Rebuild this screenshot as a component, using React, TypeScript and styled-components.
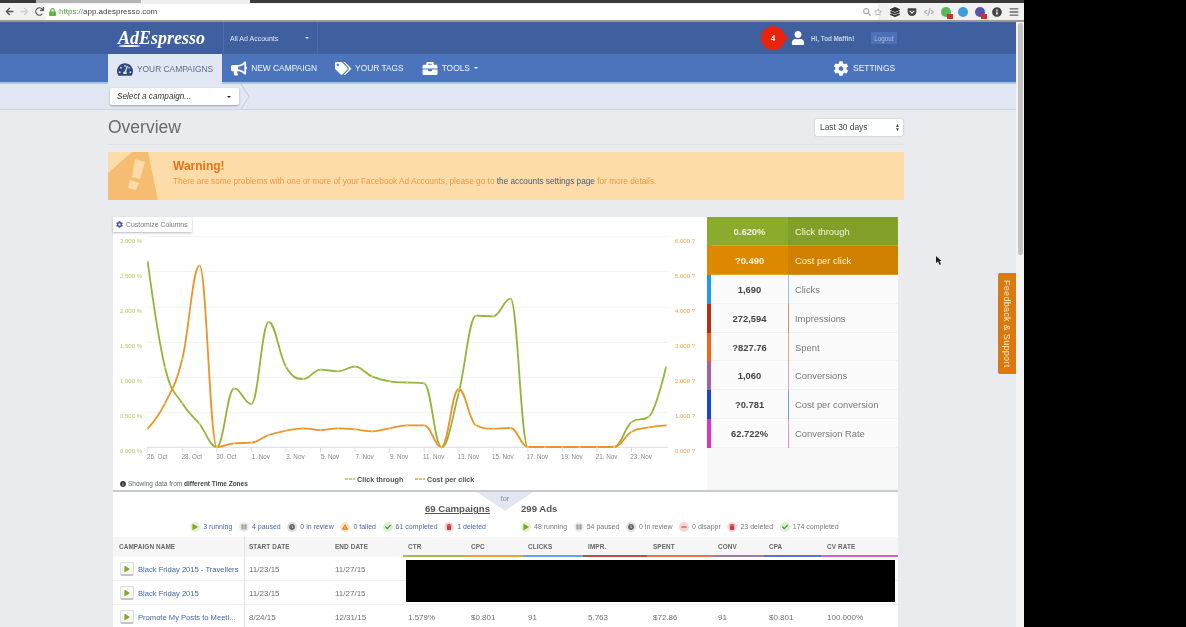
import React from 'react';
import styled, { createGlobalStyle } from 'styled-components';
import {
  FaArrowLeft, FaArrowRight, FaBars, FaBriefcase, FaBullhorn, FaCheck, FaClock, FaCog, FaCode,
  FaExclamationTriangle, FaGetPocket, FaInfoCircle, FaLayerGroup, FaLock, FaMinus, FaPause, FaPlay,
  FaRedo, FaRegStar, FaSearch, FaTachometerAlt, FaTags, FaTrash, FaUser,
} from 'react-icons/fa';

const GlobalStyle = createGlobalStyle`
  html, body {
    margin: 0;
    height: 100%;
    overflow: hidden;
    background: #000;
    font-family: 'Liberation Sans', Arial, sans-serif;
  }
  * { box-sizing: border-box; }
`;

const Screen = styled.div`
  position: relative;
  width: 1024px;
  height: 627px;
  overflow: hidden;
  background: #e9ebee;
  display: flex;
  flex-direction: column;
  filter: blur(0.4px);
`;

const TabStrip = styled.div`
  height: 3px;
  display: flex;
  background: #3a3a3a;
`;

const TabPiece = styled.div<{ $w: number; $bg: string }>`
  width: ${p => p.$w}px;
  background: ${p => p.$bg};
`;

const BrowserBar = styled.div`
  height: 19px;
  display: flex;
  align-items: center;
  padding: 0 5px;
  background: #f1f1f1;
  border-bottom: 2px solid #9a9a9a;
  color: #555;
  font-size: 9px;
`;

const NavGlyphs = styled.div`
  width: 41px;
  display: flex;
  gap: 6px;
  svg { width: 9px; height: 9px; }
`;

const UrlField = styled.div`
  flex: 1;
  height: 16px;
  display: flex;
  align-items: center;
  gap: 3px;
  padding-left: 3px;
  background: #fff;
  font-size: 8px;
  color: #444;
  svg { width: 7px; height: 8px; color: #66b53f; }
  b { font-weight: 400; color: #4d9e46; }
`;

const AddressTools = styled.div`
  width: 24px;
  display: flex;
  gap: 3px;
  margin-left: -15px;
  margin-right: -2px;
  color: #aaa;
  svg { width: 8px; height: 8px; }
`;

const ExtensionRow = styled.div`
  display: flex;
  align-items: center;
  gap: 7px;
  margin-left: 5px;
`;

const Ext = styled.span<{ $c: string }>`
  width: 10px;
  height: 10px;
  display: flex;
  color: ${p => p.$c};
  svg { width: 100%; height: 100%; }
`;

const ExtDot = styled.span<{ $c: string; $badge?: boolean }>`
  position: relative;
  width: 10px;
  height: 10px;
  border-radius: 50%;
  background: ${p => p.$c};
  &::after {
    content: '';
    display: ${p => (p.$badge ? 'block' : 'none')};
    position: absolute;
    right: -2px;
    bottom: -2px;
    width: 6px;
    height: 5px;
    background: #c9342f;
  }
`;

const Body = styled.div`
  flex: 1;
  min-height: 0;
  display: flex;
`;

const Page = styled.div`
  width: 1016px;
  display: flex;
  flex-direction: column;
  background: #e9ebee;
`;

const ScrollTrack = styled.div`
  flex: 1;
  padding: 1px 1px 0 2px;
  background: #f3f3f3;
`;

const ScrollThumb = styled.div`
  height: 232px;
  border-radius: 3px;
  background: #c3c3c3;
`;

const TopBar = styled.header`
  height: 32px;
  flex: none;
  display: flex;
  padding-left: 108px;
  background: #3f5f9e;
`;

const Logo = styled.div`
  position: relative;
  width: 115px;
  padding: 5px 0 0 10px;
  color: #fff;
  font-family: 'Liberation Serif', serif;
  font-style: italic;
  font-weight: 700;
  font-size: 18px;
  line-height: 22px;
  &::after {
    content: '';
    position: absolute;
    left: 11px;
    top: 23px;
    width: 21px;
    height: 1.5px;
    background: #fff;
    border-radius: 50%;
  }
`;

const AccountSwitch = styled.div`
  width: 95px;
  display: flex;
  align-items: center;
  justify-content: space-between;
  padding: 0 8px 0 6px;
  border-left: 1px solid #4f6ca8;
  border-right: 1px solid #4f6ca8;
  color: #e4e9f3;
  font-size: 7px;
`;

const Caret = styled.span<{ $c?: string }>`
  width: 0;
  height: 0;
  border-left: 2px solid transparent;
  border-right: 2px solid transparent;
  border-top: 2.5px solid ${p => p.$c || '#dfe5f1'};
`;

const UserArea = styled.div`
  width: 586px;
  display: flex;
  align-items: center;
  justify-content: flex-end;
  padding-right: 7px;
`;

const Notice = styled.div`
  position: relative;
  width: 24px;
  height: 24px;
  margin-right: 6px;
  display: flex;
  align-items: center;
  justify-content: center;
  border-radius: 50%;
  background: #e8240c;
  color: #fff;
  font-family: 'Liberation Serif', serif;
  font-weight: 700;
  font-size: 9px;
  &::after {
    content: '';
    position: absolute;
    right: -3px;
    top: 7px;
    border-left: 5px solid #e8240c;
    border-top: 5px solid transparent;
    border-bottom: 5px solid transparent;
  }
`;

const UserGlyph = styled.span`
  display: flex;
  margin-right: 6px;
  color: #fff;
  svg { width: 14px; height: 14px; }
`;

const Greeting = styled.span`
  width: 60px;
  color: #c9d4e9;
  font-size: 6.3px;
  font-weight: 700;
`;

const Logout = styled.span`
  width: 26px;
  height: 12px;
  display: flex;
  align-items: center;
  justify-content: center;
  background: #4d71b6;
  color: #a6bbe0;
  font-size: 6.3px;
`;

const NavBar = styled.nav`
  height: 30px;
  flex: none;
  display: flex;
  padding: 0 112px 0 108px;
  background: #4b74bc;
  border-bottom: 2px solid #a9c3e9;
`;

const NavTab = styled.div<{ $active?: boolean; $right?: boolean }>`
  display: flex;
  align-items: center;
  gap: 4px;
  padding: 0 9px;
  margin-left: ${p => (p.$right ? 'auto' : '0')};
  margin-bottom: ${p => (p.$active ? '-2px' : '0')};
  background: ${p => (p.$active ? '#e1e8f3' : 'transparent')};
  color: ${p => (p.$active ? '#5d6c88' : '#f2f5fb')};
  font-size: 8.4px;
  svg { width: 16px; height: 15px; color: ${p => (p.$active ? '#33487a' : '#fff')}; }
`;

const Crumbs = styled.div`
  height: 26px;
  flex: none;
  display: flex;
  align-items: center;
  padding-left: 110px;
  background: #e1e8f3;
  border-bottom: 1px solid #ccd4e3;
`;

const CampaignSelect = styled.div`
  width: 129px;
  height: 17px;
  display: flex;
  align-items: center;
  justify-content: space-between;
  padding: 0 8px 0 7px;
  background: #fff;
  border-radius: 2px;
  box-shadow: 0 1px 2px rgba(60, 70, 90, 0.45);
  color: #333;
  font-size: 8.2px;
  font-style: italic;
`;

const CrumbArrow = styled.svg`
  width: 10px;
  height: 25px;
  margin-left: 1px;
`;

const Content = styled.main`
  width: 796px;
  margin-left: 108px;
`;

const TitleRow = styled.div`
  height: 35px;
  display: flex;
  align-items: center;
  justify-content: space-between;
  border-bottom: 1px solid #dcdfe3;
`;

const Title = styled.h1`
  margin: 0;
  color: #666b70;
  font-size: 17.5px;
  font-weight: 400;
`;

const RangeSelect = styled.div`
  width: 88px;
  height: 17px;
  margin-right: 1px;
  display: flex;
  align-items: center;
  justify-content: space-between;
  padding: 0 3px 0 5px;
  background: #fff;
  border-radius: 2px;
  box-shadow: 0 0 2px rgba(60, 70, 90, 0.35);
  color: #444;
  font-size: 8.4px;
`;

const UpDown = styled.span`
  color: #444;
  font-size: 5px;
  line-height: 4px;
  text-align: center;
`;

const Warning = styled.section`
  height: 48px;
  margin-top: 7px;
  display: flex;
  background: #fddcaa;
`;

const WarningMark = styled.svg`
  width: 65px;
  height: 48px;
  flex: none;
`;

const WarningCopy = styled.div`
  padding-top: 7px;
`;

const WarningTitle = styled.div`
  color: #e4731a;
  font-size: 12px;
  font-weight: 700;
  line-height: 14px;
`;

const WarningText = styled.div`
  margin-top: 3px;
  color: #e89a3e;
  font-size: 8.25px;
  line-height: 12px;
  a { color: #3d5b97; text-decoration: none; }
`;

const Card = styled.section`
  width: 785px;
  margin: 17px 0 0 5px;
  background: #fff;
`;

const ChartRow = styled.div`
  height: 273px;
  display: flex;
`;

const ChartPane = styled.div`
  position: relative;
  width: 594px;
  svg { display: block; }
`;

const CustomizeButton = styled.div`
  position: absolute;
  left: 0;
  top: 0;
  width: 79px;
  height: 15px;
  display: flex;
  align-items: center;
  gap: 3px;
  padding-left: 3px;
  background: #fff;
  box-shadow: 0 1px 2px rgba(70, 80, 110, 0.4);
  color: #777;
  font-size: 6.9px;
  svg { width: 7px; height: 7px; color: #4b5a9c; }
`;

const TimeZoneNote = styled.div`
  position: absolute;
  left: 7px;
  bottom: 3px;
  display: flex;
  align-items: center;
  gap: 2px;
  color: #666;
  font-size: 6.5px;
  b { color: #444; }
  svg { width: 6px; height: 6px; color: #333; }
`;

const MetricList = styled.div`
  width: 191px;
  background: #f8f8f8;
`;

const MetricRow = styled.div<{ $accent: string; $filled?: boolean }>`
  height: 28.9px;
  display: grid;
  grid-template-columns: 77px 1fr;
  align-items: stretch;
  border-left: 4px solid ${p => p.$accent};
  background: ${p => (p.$filled ? p.$accent : '#fbfbfb')};
  box-shadow: inset 0 -1px 0 ${p => (p.$filled ? 'rgba(255,255,255,0.2)' : '#f0f0f0')};
  font-size: 9.4px;
`;

const MetricValue = styled.div<{ $filled?: boolean }>`
  display: flex;
  align-items: center;
  justify-content: center;
  font-weight: 700;
  color: ${p => (p.$filled ? '#f3f3df' : '#444')};
`;

const MetricName = styled.div<{ $accent: string; $filled?: boolean }>`
  display: flex;
  align-items: center;
  padding-left: 6px;
  border-left: 1px solid ${p => (p.$filled ? 'transparent' : `${p.$accent}88`)};
  background: ${p => (p.$filled ? 'rgba(0,0,0,0.06)' : 'transparent')};
  color: ${p => (p.$filled ? '#f6f3dc' : '#777')};
`;

const Summary = styled.div`
  position: relative;
  height: 47px;
  display: grid;
  grid-template-columns: 392px 1fr;
  border-top: 2px solid #c6c9ce;
`;

const ForFlag = styled.div`
  position: absolute;
  left: 364px;
  top: 0;
  width: 56px;
  height: 19px;
  padding-top: 2px;
  clip-path: polygon(0 0, 100% 0, 50% 100%);
  background: #e1e6f0;
  color: #8b8f97;
  font-size: 7.5px;
  text-align: center;
`;

const SummaryColumn = styled.div<{ $right?: boolean }>`
  display: flex;
  flex-direction: column;
  gap: 7px;
  padding-top: 11px;
  align-items: ${p => (p.$right ? 'flex-end' : 'flex-start')};
  padding-right: ${p => (p.$right ? '15px' : '0')};
  padding-left: ${p => (p.$right ? '0' : '16px')};
`;

const SummaryTitle = styled.div<{ $underlined?: boolean }>`
  color: #555;
  font-size: 9.6px;
  font-weight: 700;
  line-height: 12px;
  text-decoration: ${p => (p.$underlined ? 'underline' : 'none')};
`;

const StatusRow = styled.div<{ $inset?: boolean }>`
  display: flex;
  gap: 6.6px;
  margin-right: ${p => (p.$inset ? '4px' : '0')};
`;

const Status = styled.span<{ $muted?: boolean }>`
  display: flex;
  align-items: center;
  gap: 3px;
  color: ${p => (p.$muted ? '#777' : '#4a69a8')};
  font-size: 7px;
  line-height: 10px;
  white-space: nowrap;
`;

const StatusIcon = styled.span<{ $bg: string; $fg: string }>`
  width: 10px;
  height: 10px;
  display: flex;
  align-items: center;
  justify-content: center;
  border-radius: 50%;
  background: ${p => p.$bg};
  color: ${p => p.$fg};
  svg { width: 6px; height: 6px; }
`;

const columns = '132px 86px 72px 62px 58px 60px 64px 66px 51px 57px 77px';

const TableWrap = styled.div`
  position: relative;
`;

const HeadRow = styled.div`
  height: 20px;
  display: grid;
  grid-template-columns: ${columns};
  background: #f6f6f6;
`;

const HeadCell = styled.div<{ $line?: string; $first?: boolean; $pad: number }>`
  display: flex;
  align-items: center;
  padding-left: ${p => p.$pad}px;
  border-bottom: 2px solid ${p => p.$line || 'transparent'};
  border-right: ${p => (p.$first ? '1px solid #e0e0e0' : '0')};
  color: #666;
  font-size: 6.4px;
  font-weight: 700;
  letter-spacing: 0.1px;
`;

const BodyRow = styled.div`
  height: 24px;
  display: grid;
  grid-template-columns: ${columns};
  background: #fff;
  border-bottom: 1px solid #efefef;
`;

const Cell = styled.div<{ $first?: boolean; $pad: number }>`
  display: flex;
  align-items: center;
  gap: 4px;
  padding-left: ${p => p.$pad}px;
  padding-top: 1px;
  border-right: ${p => (p.$first ? '1px solid #e0e0e0' : '0')};
  color: #707070;
  font-size: 8px;
  white-space: nowrap;
`;

const PlayButton = styled.span`
  width: 14px;
  height: 14px;
  flex: none;
  display: flex;
  align-items: center;
  justify-content: center;
  border: 1px solid #ddd;
  border-bottom: 2px solid #c4c4c4;
  border-radius: 2px;
  background: #f7f7f7;
  color: #86a92b;
  svg { width: 6px; height: 6px; }
`;

const CampaignLink = styled.a`
  color: #4465a8;
  font-size: 7.6px;
`;

const Redaction = styled.div`
  position: absolute;
  left: 293px;
  top: 23px;
  width: 489px;
  height: 42px;
  background: #000;
`;

const FeedbackTab = styled.div`
  position: absolute;
  left: 998px;
  top: 273px;
  width: 18px;
  height: 101px;
  display: flex;
  align-items: center;
  justify-content: center;
  background: #d87a10;
  border-radius: 2px 0 0 2px;
  color: #f7e6c8;
  font-size: 9px;
  letter-spacing: 0.3px;
  writing-mode: vertical-rl;
`;

const Pointer = styled.svg`
  position: absolute;
  left: 936px;
  top: 256px;
  width: 6px;
  height: 10px;
`;

const xAt = (i: number) => 147.7 + i * 17.28;

const ctr = [261.7, 367.3, 403.3, 424, 447, 388.3, 404, 322, 366.7, 379, 369.7, 371.3, 366.7, 376.7, 381.3, 382.5,
  383.3, 447.3, 392.7, 315.7, 316.3, 298.7, 447, 447, 447, 447, 447, 447, 422, 416.7, 366.7];
const cpc = [428.7, 403.3, 359, 265.7, 447, 443.3, 442.7, 435, 430.7, 428.3, 430, 428.3, 429.3, 431.3, 428.3, 425.3,
  425.3, 447, 389, 425.3, 428.7, 428, 447, 447, 447, 447, 447, 447, 431.7, 427.3, 425.3];

// same smoothing as a highcharts spline series
const spline = (ys: number[]) => {
  const s = 1.5;
  let d = `M${xAt(0)} ${ys[0]}`;
  let prevRight: [number, number] = [xAt(0), ys[0]];
  for (let i = 1; i < ys.length; i++) {
    const x = xAt(i);
    const y = ys[i];
    let left: [number, number] = [x, y];
    let right: [number, number] = [x, y];
    if (i < ys.length - 1) {
      const last = ys[i - 1];
      const next = ys[i + 1];
      const lx = (s * x + xAt(i - 1)) / (s + 1);
      const rx = (s * x + xAt(i + 1)) / (s + 1);
      let ly = (s * y + last) / (s + 1);
      let ry = (s * y + next) / (s + 1);
      const fix = ((ry - ly) * (rx - x)) / (rx - lx) + y - ry;
      ly += fix;
      ry += fix;
      if (ly > last && ly > y) {
        ly = Math.max(last, y);
        ry = 2 * y - ly;
      } else if (ly < last && ly < y) {
        ly = Math.min(last, y);
        ry = 2 * y - ly;
      }
      if (ry > next && ry > y) {
        ry = Math.max(next, y);
        ly = 2 * y - ry;
      } else if (ry < next && ry < y) {
        ry = Math.min(next, y);
        ly = 2 * y - ry;
      }
      left = [lx, ly];
      right = [rx, ry];
    }
    d += ` C${prevRight[0]} ${prevRight[1]} ${left[0]} ${left[1]} ${x} ${y}`;
    prevRight = right;
  }
  return d;
};

const gridYs = [236.7, 271.7, 307.3, 342.3, 377.3, 412.3, 447.3];
const leftLabels = ['3.000 %', '2.500 %', '2.000 %', '1.500 %', '1.000 %', '0.500 %', '0.000 %'];
const rightLabels = ['6.000 ?', '5.000 ?', '4.000 ?', '3.000 ?', '2.000 ?', '1.000 ?', '0.000 ?'];
const dateLabels = ['26. Oct', '28. Oct', '30. Oct', '1. Nov', '3. Nov', '5. Nov', '7. Nov', '9. Nov', '11. Nov',
  '13. Nov', '15. Nov', '17. Nov', '19. Nov', '21. Nov', '23. Nov'];

const Series = ({ ys, color, dot }: { ys: number[]; color: string; dot: string }) => (
  <g>
    <path d={spline(ys)} fill="none" stroke={color} strokeWidth="1.8" />
    {ys.map((y, i) => <circle key={i} cx={xAt(i)} cy={y} r="1" fill={dot} />)}
  </g>
);

const Chart = () => (
  <svg width="594" height="273" viewBox="113 217 594 273" fontFamily="Liberation Sans, Arial, sans-serif">
    {gridYs.map(y => <line key={y} x1="147" x2="668" y1={y} y2={y} stroke={y > 440 ? '#d9dde2' : '#f1f2f4'} />)}
    {gridYs.map((y, i) => (
      <g key={y} fontSize="6">
        <text x="120" y={y + 6} fill="#b5cb5c">{leftLabels[i]}</text>
        <text x="675" y={y + 6} fill="#efa444">{rightLabels[i]}</text>
      </g>
    ))}
    {dateLabels.map((label, i) => (
      <g key={label}>
        <line x1={xAt(i * 2)} x2={xAt(i * 2)} y1="447" y2="452" stroke="#d9dde2" />
        <text x={xAt(i * 2) + 9.5} y="459" fontSize="6.3" textAnchor="middle" fill="#888">{label}</text>
      </g>
    ))}
    <Series ys={ctr} color="#95b53a" dot="#c9dc74" />
    <Series ys={cpc} color="#e8962a" dot="#f6c477" />
    <line x1="345" x2="355" y1="479" y2="479" stroke="#b1c93f" strokeWidth="1.5" strokeDasharray="3 1" />
    <text x="357" y="481.5" fontSize="7.2" fontWeight="700" fill="#555">Click through</text>
    <line x1="415" x2="425" y1="479" y2="479" stroke="#ed9c2c" strokeWidth="1.5" strokeDasharray="3 1" />
    <text x="427" y="481.5" fontSize="7.2" fontWeight="700" fill="#555">Cost per click</text>
  </svg>
);

const metrics = [
  { value: '0.620%', name: 'Click through', accent: '#8bab2c', filled: true },
  { value: '?0.490', name: 'Cost per click', accent: '#dc8900', filled: true },
  { value: '1,690', name: 'Clicks', accent: '#1e9bea' },
  { value: '272,594', name: 'Impressions', accent: '#b23014' },
  { value: '?827.76', name: 'Spent', accent: '#f0641e' },
  { value: '1,060', name: 'Conversions', accent: '#a4609f' },
  { value: '?0.781', name: 'Cost per conversion', accent: '#1546d8' },
  { value: '62.722%', name: 'Conversion Rate', accent: '#dc32cc' },
];

const iconFor = {
  running: { bg: '#e6f0d0', fg: '#86a92b', glyph: <FaPlay /> },
  paused: { bg: '#ececec', fg: '#a0a0a0', glyph: <FaPause /> },
  review: { bg: '#dedede', fg: '#666', glyph: <FaClock /> },
  failed: { bg: '#fbe6cc', fg: '#e5861f', glyph: <FaExclamationTriangle /> },
  completed: { bg: '#dcefd4', fg: '#3d9a2e', glyph: <FaCheck /> },
  deleted: { bg: '#f8dcdc', fg: '#cf3a46', glyph: <FaTrash /> },
  disappr: { bg: '#f8d6d6', fg: '#d4212b', glyph: <FaMinus /> },
};

type StatusKind = keyof typeof iconFor;

const campaignStatus: [StatusKind, string][] = [
  ['running', '3 running'], ['paused', '4 paused'], ['review', '0 in review'],
  ['failed', '0 failed'], ['completed', '61 completed'], ['deleted', '1 deleted'],
];
const adStatus: [StatusKind, string][] = [
  ['running', '48 running'], ['paused', '54 paused'], ['review', '0 in review'],
  ['disappr', '0 disappr'], ['deleted', '23 deleted'], ['completed', '174 completed'],
];

const StatusList = ({ items, muted }: { items: [StatusKind, string][]; muted?: boolean }) => (
  <StatusRow $inset={!muted}>
    {items.map(([kind, label]) => (
      <Status key={label} $muted={muted}>
        <StatusIcon $bg={iconFor[kind].bg} $fg={iconFor[kind].fg}>{iconFor[kind].glyph}</StatusIcon>
        {label}
      </Status>
    ))}
  </StatusRow>
);

const heads = [
  { label: 'CAMPAIGN NAME' }, { label: 'START DATE' }, { label: 'END DATE' },
  { label: 'CTR', line: '#a3bb4a' }, { label: 'CPC', line: '#e6a53c' }, { label: 'CLICKS', line: '#62a6dc' },
  { label: 'IMPR.', line: '#b9504a' }, { label: 'SPENT', line: '#e4764a' }, { label: 'CONV', line: '#9d7ba6' },
  { label: 'CPA', line: '#5a72d6' }, { label: 'CV RATE', line: '#d062cc' },
];

// left inset of each column's text
const headPads = [6, 4, 4, 5, 6, 5, 5, 6, 5, 5, 6];
const cellPads = [7, 4, 4, 5, 6, 5, 5, 6, 5, 5, 6];

const rows = [
  ['Black Friday 2015 - Travellers', '11/23/15', '11/27/15', '', '', '', '', '', '', '', ''],
  ['Black Friday 2015', '11/23/15', '11/27/15', '', '', '', '', '', '', '', ''],
  ['Promote My Posts to Meeti...', '8/24/15', '12/31/15', '1.579%', '$0.801', '91', '5,763', '$72.86', '91', '$0.801', '100.000%'],
];

export default function App() {
  return (
    <Screen>
      <GlobalStyle />
      <TabStrip>
        <TabPiece $w={36} $bg="#3a3a3a" />
        <TabPiece $w={105} $bg="#b5b5b5" />
        <TabPiece $w={109} $bg="#efefef" />
      </TabStrip>
      <BrowserBar>
        <NavGlyphs>
          <FaArrowLeft />
          <FaArrowRight color="#cfcfcf" />
          <FaRedo />
        </NavGlyphs>
        <UrlField>
          <FaLock />
          <span><b>https://</b>app.adespresso.com</span>
        </UrlField>
        <AddressTools>
          <FaSearch />
          <FaRegStar />
        </AddressTools>
        <ExtensionRow>
          <Ext $c="#333"><FaLayerGroup /></Ext>
          <Ext $c="#444"><FaGetPocket /></Ext>
          <Ext $c="#b5b5b5"><FaCode /></Ext>
          <ExtDot $c="#5cb85c" $badge />
          <ExtDot $c="#3f9ae0" />
          <ExtDot $c="#5b4fa8" $badge />
          <Ext $c="#444"><FaInfoCircle /></Ext>
          <Ext $c="#666"><FaBars /></Ext>
        </ExtensionRow>
      </BrowserBar>
      <Body>
        <Page>
          <TopBar>
            <Logo>AdEspresso</Logo>
            <AccountSwitch>
              All Ad Accounts
              <Caret />
            </AccountSwitch>
            <UserArea>
              <Notice>4</Notice>
              <UserGlyph><FaUser /></UserGlyph>
              <Greeting>Hi, Tod Maffin!</Greeting>
              <Logout>Logout</Logout>
            </UserArea>
          </TopBar>
          <NavBar>
            <NavTab $active><FaTachometerAlt />YOUR CAMPAIGNS</NavTab>
            <NavTab><FaBullhorn />NEW CAMPAIGN</NavTab>
            <NavTab><FaTags />YOUR TAGS</NavTab>
            <NavTab><FaBriefcase />TOOLS<Caret $c="#fff" /></NavTab>
            <NavTab $right><FaCog />SETTINGS</NavTab>
          </NavBar>
          <Crumbs>
            <CampaignSelect>
              Select a campaign...
              <Caret $c="#222" />
            </CampaignSelect>
            <CrumbArrow viewBox="0 0 10 25">
              <path d="M1 0 L9 12.5 L1 25" fill="none" stroke="#c3cbda" />
            </CrumbArrow>
          </Crumbs>
          <Content>
            <TitleRow>
              <Title>Overview</Title>
              <RangeSelect>
                Last 30 days
                <UpDown>▲<br />▼</UpDown>
              </RangeSelect>
            </TitleRow>
            <Warning>
              <WarningMark viewBox="0 0 65 48">
                <path d="M0 21 L24 0 L40 0 L50 48 L0 48 Z" fill="#f6bd72" />
                <path d="M27 7 L37 10 L32 27 L24 25 Z" fill="#fddcaa" />
                <path d="M22 28 L31 31 L28 38 L20 36 Z" fill="#fddcaa" />
              </WarningMark>
              <WarningCopy>
                <WarningTitle>Warning!</WarningTitle>
                <WarningText>
                  There are some problems with one or more of your Facebook Ad Accounts, please go to{' '}
                  <a href="#accounts">the accounts settings page</a> for more details.
                </WarningText>
              </WarningCopy>
            </Warning>
            <Card>
              <ChartRow>
                <ChartPane>
                  <Chart />
                  <CustomizeButton><FaCog />Customize Columns</CustomizeButton>
                  <TimeZoneNote>
                    <FaInfoCircle />
                    <span>Showing data from <b>different Time Zones</b></span>
                  </TimeZoneNote>
                </ChartPane>
                <MetricList>
                  {metrics.map(m => (
                    <MetricRow key={m.name} $accent={m.accent} $filled={m.filled}>
                      <MetricValue $filled={m.filled}>{m.value}</MetricValue>
                      <MetricName $accent={m.accent} $filled={m.filled}>{m.name}</MetricName>
                    </MetricRow>
                  ))}
                </MetricList>
              </ChartRow>
              <Summary>
                <ForFlag>for</ForFlag>
                <SummaryColumn $right>
                  <SummaryTitle $underlined>69 Campaigns</SummaryTitle>
                  <StatusList items={campaignStatus} />
                </SummaryColumn>
                <SummaryColumn>
                  <SummaryTitle>299 Ads</SummaryTitle>
                  <StatusList items={adStatus} muted />
                </SummaryColumn>
              </Summary>
              <TableWrap>
                <HeadRow>
                  {heads.map((h, i) => (
                    <HeadCell key={h.label} $line={h.line} $first={i === 0} $pad={headPads[i]}>{h.label}</HeadCell>
                  ))}
                </HeadRow>
                {rows.map(row => (
                  <BodyRow key={row[0]}>
                    {row.map((text, i) => (
                      i === 0 ? (
                        <Cell key={i} $first $pad={cellPads[i]}>
                          <PlayButton><FaPlay /></PlayButton>
                          <CampaignLink>{text}</CampaignLink>
                        </Cell>
                      ) : <Cell key={i} $pad={cellPads[i]}>{text}</Cell>
                    ))}
                  </BodyRow>
                ))}
                <Redaction />
              </TableWrap>
            </Card>
          </Content>
        </Page>
        <ScrollTrack><ScrollThumb /></ScrollTrack>
      </Body>
      <FeedbackTab>Feedback &amp; Support</FeedbackTab>
      <Pointer viewBox="0 0 6 10">
        <path d="M0 0 L0 7 L2 5.5 L3.5 9 L5 8.3 L3.5 5 L5.5 5 Z" fill="#222" />
      </Pointer>
    </Screen>
  );
}
